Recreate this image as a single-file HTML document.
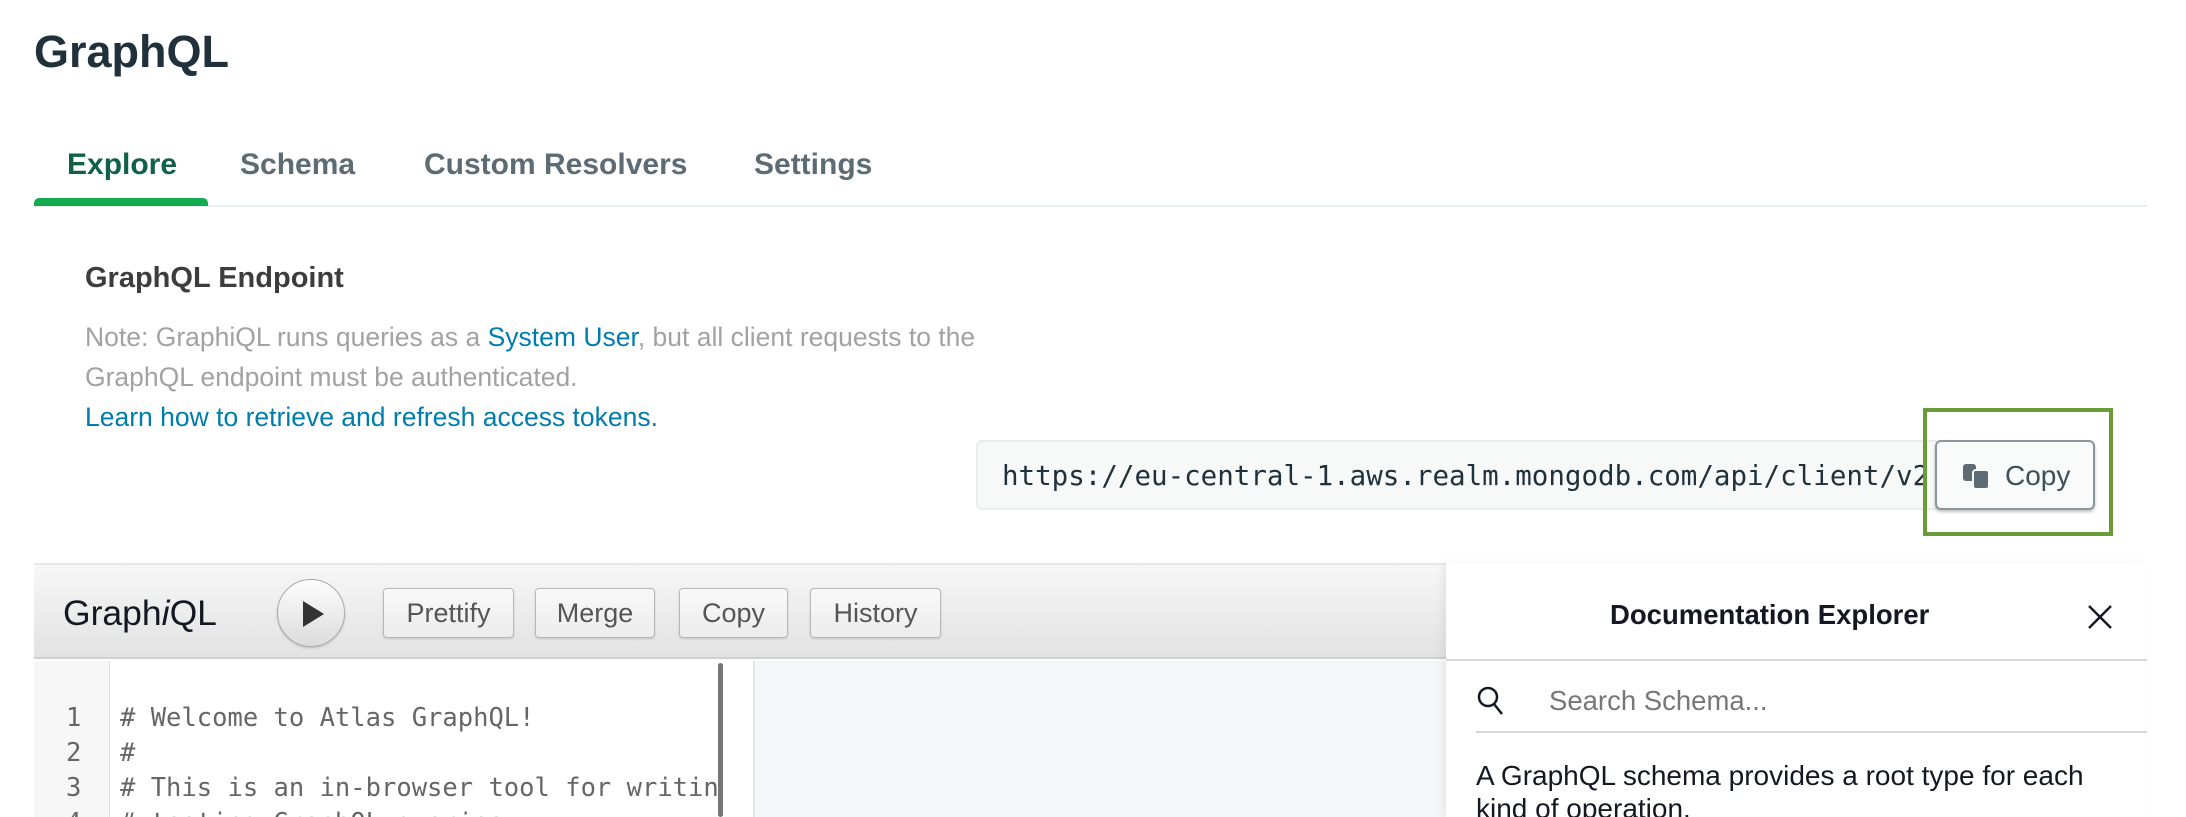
<!DOCTYPE html>
<html style="overflow:hidden"><head><meta charset="utf-8"><style>
*{box-sizing:border-box;margin:0;padding:0}
html,body{width:2186px;height:817px;overflow:hidden}
body{background:#fff;font-family:"Liberation Sans",sans-serif;position:relative}
#w{position:absolute;left:0;top:0;width:2186px;height:817px;overflow:hidden}
.a{position:absolute;white-space:nowrap}
.mono{font-family:"DejaVu Sans Mono","Liberation Mono",monospace}
.btn{position:absolute;top:588px;height:50px;border:1px solid #b8b8b8;border-radius:4px;background:linear-gradient(#f9f9f9,#ececec);box-shadow:0 1px 2px rgba(0,0,0,.15);font-size:27px;color:#555;text-align:center;line-height:48px}
</style></head><body><div id="w">
<div class="a" style="left:34px;top:26px;font-size:45px;font-weight:bold;color:#21313c">GraphQL</div>
<div class="a" style="left:67px;top:148px;font-size:30px;font-weight:bold;color:#116149">Explore</div>
<div class="a" style="left:240px;top:148px;font-size:30px;font-weight:bold;color:#5d6c74">Schema</div>
<div class="a" style="left:424px;top:148px;font-size:30px;font-weight:bold;color:#5d6c74">Custom Resolvers</div>
<div class="a" style="left:754px;top:148px;font-size:30px;font-weight:bold;color:#5d6c74">Settings</div>
<div class="a" style="left:34px;top:205px;width:2113px;height:2px;background:#e7eeec"></div>
<div class="a" style="left:34px;top:198px;width:174px;height:8px;background:#13aa52;border-radius:5px 5px 0 0"></div>
<div class="a" style="left:85px;top:262px;font-size:29px;font-weight:bold;color:#3d3d3d">GraphQL Endpoint</div>
<div class="a" style="left:85px;top:317px;font-size:26.5px;color:#a2a2a2;line-height:40px">Note: GraphiQL runs queries as a <span style="color:#007cad">System User</span>, but all client requests to the<br>GraphQL endpoint must be authenticated.<br><span style="color:#007cad">Learn how to retrieve and refresh access tokens.</span></div>
<div class="a" style="left:976px;top:440px;width:966px;height:70px;background:#f7f9f8;border:2px solid #e7eeec;border-radius:6px;overflow:hidden"><div class="mono a" style="left:24px;top:18px;font-size:27.5px;color:#21313c">https://eu-central-1.aws.realm.mongodb.com/api/client/v2</div></div>
<div class="a" style="left:1935px;top:440px;width:160px;height:70px;background:#f9fbfa;border:2px solid #89979b;border-radius:6px;box-shadow:0 2px 3px rgba(0,0,0,.25)">
<svg class="a" style="left:25px;top:20px" width="30" height="28" viewBox="0 0 30 28"><rect x="1" y="2" width="13" height="17" rx="3" fill="#5d6c74"/><rect x="11" y="8" width="16" height="19" rx="3" fill="#5d6c74" stroke="#f9fbfa" stroke-width="2"/></svg>
<div class="a" style="left:68px;top:18px;font-size:28px;color:#3d4f58">Copy</div></div>
<div class="a" style="left:1923px;top:408px;width:190px;height:128px;border:4px solid #6a9c36"></div>
<div class="a" style="left:34px;top:563px;width:2113px;height:96px;background:linear-gradient(#f7f7f7,#e2e2e2);border-top:2px solid #e8e8e8;border-bottom:2px solid #d0d0d0"></div>
<div class="a" style="left:63px;top:593px;font-size:35.5px;color:#141823">Graph<i>i</i>QL</div>
<div class="a" style="left:277px;top:579px;width:68px;height:68px;border-radius:50%;border:1px solid #aaa;background:linear-gradient(#fdfdfd,#dcdcdc);box-shadow:0 1px 2px rgba(0,0,0,.2)"><svg class="a" style="left:25px;top:21px" width="22" height="26"><path d="M0 0L21 13L0 26Z" fill="#333"/></svg></div>
<div class="btn" style="left:383px;width:131px">Prettify</div>
<div class="btn" style="left:535px;width:120px">Merge</div>
<div class="btn" style="left:679px;width:109px">Copy</div>
<div class="btn" style="left:810px;width:131px">History</div>
<div class="a" style="left:34px;top:661px;width:75px;height:156px;background:#f7f7f7"></div>
<div class="a" style="left:109px;top:661px;width:1px;height:156px;background:#ddd"></div>
<div class="a" style="left:753px;top:661px;width:693px;height:156px;background:#f5f6f8;border-left:2px solid #e6e6e6"></div>
<div class="a" style="left:34px;top:661px;width:75px;height:156px;overflow:hidden"><div class="a mono" style="left:32px;top:40px;font-size:25.5px;line-height:35px;color:#666;text-align:right">1<br>2<br>3<br>4</div></div>
<div class="a" style="left:110px;top:661px;width:608px;height:156px;overflow:hidden"><div class="a mono" style="left:10px;top:40px;font-size:25.5px;line-height:35px;color:#666">#&nbsp;Welcome to Atlas GraphQL!<br>#<br>#&nbsp;This is an in-browser tool for writing<br>#&nbsp;testing GraphQL queries</div></div>
<div class="a" style="left:718px;top:663px;width:5px;height:154px;background:#777;border-radius:3px"></div>
<div class="a" style="left:1446px;top:563px;width:701px;height:254px;background:#fff;box-shadow:-4px 0 8px rgba(0,0,0,.06)"></div>
<div class="a" style="left:1446px;top:659px;width:701px;height:2px;background:#d6d6d6"></div>
<div class="a" style="left:1610px;top:599px;font-size:27.5px;font-weight:bold;color:#141823">Documentation Explorer</div>
<svg class="a" style="left:2087px;top:604px" width="26" height="26"><path d="M2 2L24 24M24 2L2 24" stroke="#141823" stroke-width="2.5"/></svg>
<svg class="a" style="left:1476px;top:685px" width="30" height="32"><circle cx="12" cy="12" r="9" fill="none" stroke="#141823" stroke-width="2.5"/><path d="M18 19L26 29" stroke="#141823" stroke-width="2.5"/></svg>
<div class="a" style="left:1549px;top:685px;font-size:27.5px;color:#777">Search Schema...</div>
<div class="a" style="left:1476px;top:731px;width:671px;height:2px;background:#d6d6d6"></div>
<div class="a" style="left:1476px;top:759px;font-size:28px;line-height:33px;color:#141823">A GraphQL schema provides a root type for each<br>kind of operation.</div>
</div></body></html>
